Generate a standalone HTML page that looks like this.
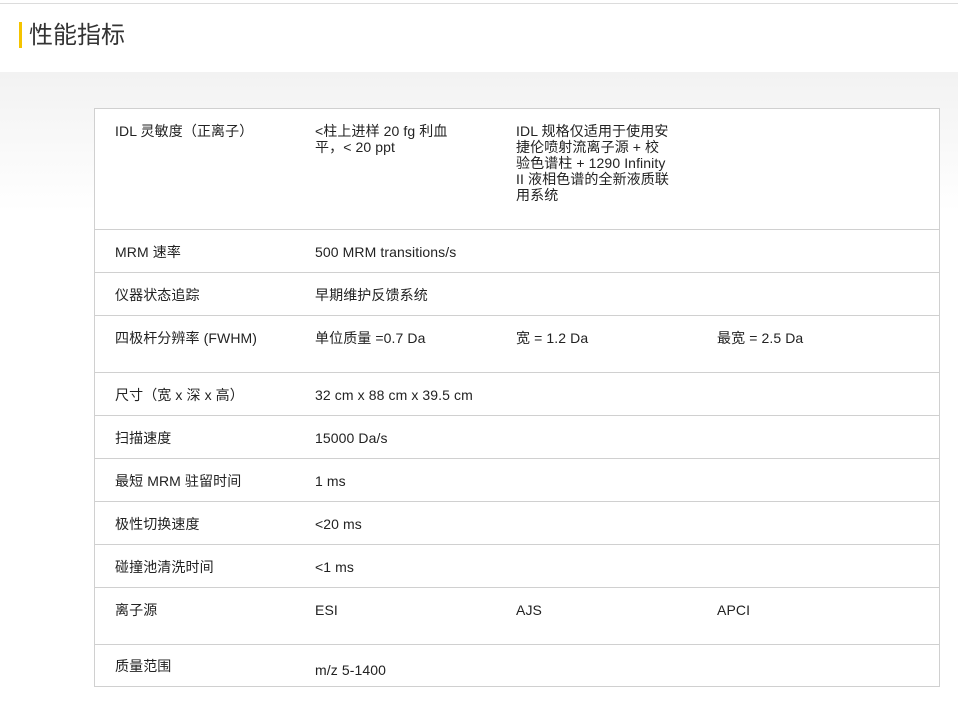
<!DOCTYPE html>
<html><head><meta charset="utf-8"><style>
body{margin:0;width:958px;height:710px;overflow:hidden;background:#fff;font-family:"Liberation Sans","Noto Sans CJK SC",sans-serif;color:#333;position:relative}
.top{position:absolute;left:0;top:3px;width:958px;height:1px;background:#dcdcdc}
.bar{position:absolute;left:19px;top:22px;width:3px;height:26px;background:#f5c400}
.title{position:absolute;left:29px;top:20px;font-size:24px;line-height:32px;color:#333}
.bg{position:absolute;left:0;top:72px;width:958px;height:638px;background:linear-gradient(#f2f2f2,#fff 140px)}
.tbl{position:absolute;left:94px;top:108px;width:844px;height:577px;border:1px solid #d0d0d0;background:#fff}
.row{position:absolute;left:0;width:844px;border-top:1px solid #d0d0d0}
.c{position:absolute;font-size:14px;line-height:16px;white-space:nowrap;color:#222;letter-spacing:0.1px}
</style></head><body>
<div class="top"></div>
<div class="bar"></div>
<div class="title">性能指标</div>
<div class="bg"></div>
<div class="tbl">
<div class="c" style="left:20px;top:14px">IDL 灵敏度（正离子）</div>
<div class="c" style="left:220px;top:14px">&lt;柱上进样 20 fg 利血<br>平，&lt; 20 ppt</div>
<div class="c" style="left:421px;top:14px">IDL 规格仅适用于使用安<br>捷伦喷射流离子源 + 校<br>验色谱柱 + 1290 Infinity<br>II 液相色谱的全新液质联<br>用系统</div>

<div class="row" style="top:120px"></div>
<div class="c" style="left:20px;top:135px">MRM 速率</div>
<div class="c" style="left:220px;top:135px">500 MRM transitions/s</div>

<div class="row" style="top:163px"></div>
<div class="c" style="left:20px;top:178px">仪器状态追踪</div>
<div class="c" style="left:220px;top:178px">早期维护反馈系统</div>

<div class="row" style="top:206px"></div>
<div class="c" style="left:20px;top:221px">四极杆分辨率 (FWHM)</div>
<div class="c" style="left:220px;top:221px">单位质量 =0.7 Da</div>
<div class="c" style="left:421px;top:221px">宽 = 1.2 Da</div>
<div class="c" style="left:622px;top:221px">最宽 = 2.5 Da</div>

<div class="row" style="top:263px"></div>
<div class="c" style="left:20px;top:278px">尺寸（宽 x 深 x 高）</div>
<div class="c" style="left:220px;top:278px">32 cm x 88 cm x 39.5 cm</div>

<div class="row" style="top:306px"></div>
<div class="c" style="left:20px;top:321px">扫描速度</div>
<div class="c" style="left:220px;top:321px">15000 Da/s</div>

<div class="row" style="top:349px"></div>
<div class="c" style="left:20px;top:364px">最短 MRM 驻留时间</div>
<div class="c" style="left:220px;top:364px">1 ms</div>

<div class="row" style="top:392px"></div>
<div class="c" style="left:20px;top:407px">极性切换速度</div>
<div class="c" style="left:220px;top:407px">&lt;20 ms</div>

<div class="row" style="top:435px"></div>
<div class="c" style="left:20px;top:450px">碰撞池清洗时间</div>
<div class="c" style="left:220px;top:450px">&lt;1 ms</div>

<div class="row" style="top:478px"></div>
<div class="c" style="left:20px;top:493px">离子源</div>
<div class="c" style="left:220px;top:493px">ESI</div>
<div class="c" style="left:421px;top:493px">AJS</div>
<div class="c" style="left:622px;top:493px">APCI</div>

<div class="row" style="top:535px"></div>
<div class="c" style="left:20px;top:549px">质量范围</div>
<div class="c" style="left:220px;top:553px">m/z 5-1400</div>
</div>
</body></html>
